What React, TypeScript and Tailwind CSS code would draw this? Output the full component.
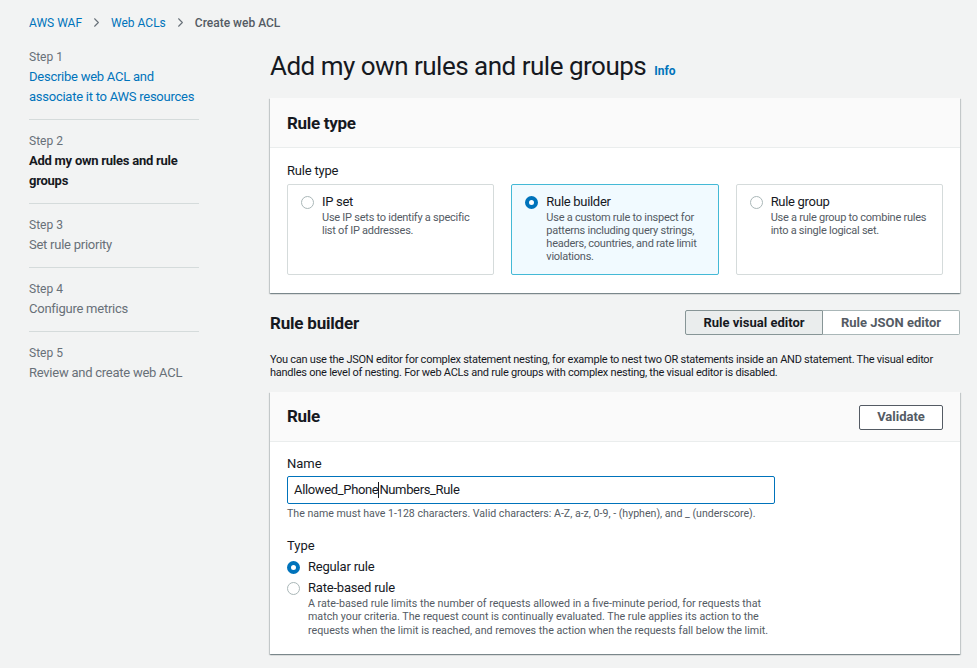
import { ChevronRight } from "lucide-react";

const font = { fontFamily: "Roboto, 'Noto Sans', Arial, sans-serif" };

type Step = { label: string; title: string; state: "link" | "active" | "todo" };

const steps: Step[] = [
  { label: "Step 1", title: "Describe web ACL and associate it to AWS resources", state: "link" },
  { label: "Step 2", title: "Add my own rules and rule groups", state: "active" },
  { label: "Step 3", title: "Set rule priority", state: "todo" },
  { label: "Step 4", title: "Configure metrics", state: "todo" },
  { label: "Step 5", title: "Review and create web ACL", state: "todo" },
];

const ruleTypes = [
  { title: "IP set", desc: "Use IP sets to identify a specific list of IP addresses.", selected: false },
  {
    title: "Rule builder",
    desc: "Use a custom rule to inspect for patterns including query strings, headers, countries, and rate limit violations.",
    selected: true,
  },
  { title: "Rule group", desc: "Use a rule group to combine rules into a single logical set.", selected: false },
];

function Radio({ checked }: { checked: boolean }) {
  return checked ? (
    <span className="mt-[3px] block h-[13px] w-[13px] shrink-0 rounded-full border-[4px] border-[#0073bb] bg-white" />
  ) : (
    <span className="mt-[3px] block h-[13px] w-[13px] shrink-0 rounded-full border border-[#aab7b8] bg-white" />
  );
}

function Container({ title, action, children }: { title: string; action?: React.ReactNode; children: React.ReactNode }) {
  return (
    <div className="bg-white shadow-[0_1px_1px_0_rgba(0,28,36,0.3),1px_1px_1px_0_rgba(0,28,36,0.15),-1px_1px_1px_0_rgba(0,28,36,0.15)]">
      <div className="flex h-[50px] items-center justify-between border-b border-[#eaeded] bg-[#fafafa] px-[17px] pt-[2px]">
        <h2 className="text-[17px] font-bold tracking-[-0.3px] text-[#16191f]">{title}</h2>
        {action}
      </div>
      <div className="px-[17px] pt-[13px]">{children}</div>
    </div>
  );
}

export default function App() {
  return (
    <div style={font} className="h-[668px] w-[977px] overflow-hidden bg-[#f2f3f3] text-[#16191f]">
      {/* breadcrumbs */}
      <nav className="flex h-[44px] items-center gap-[7px] pl-[29px] pt-[1px] text-[12px]">
        <span className="text-[#0073bb]">AWS WAF</span>
        <ChevronRight size={15} strokeWidth={1.7} className="text-[#687078]" />
        <span className="text-[#0073bb]">Web ACLs</span>
        <ChevronRight size={15} strokeWidth={1.7} className="text-[#687078]" />
        <span className="font-medium text-[#545b64]">Create web ACL</span>
      </nav>

      <div className="flex">
        {/* wizard steps */}
        <aside className="w-[270px] shrink-0 pl-[29px] pr-[71px] pt-[5px]">
          {steps.map((s, i) => (
            <div key={s.label} className={i === 0 ? "pb-[12px]" : "border-t border-[#d5dbdb] pb-[12px] pt-[13px]"}>
              <div className="text-[12px] leading-[16px] text-[#687078]">{s.label}</div>
              <div
                className={
                  "mt-[2px] text-[13px] leading-[20px] tracking-[-0.25px] " +
                  (s.state === "link"
                    ? "text-[#0073bb]"
                    : s.state === "active"
                      ? "font-bold text-[#16191f]"
                      : "text-[#687078]")
                }
              >
                {s.title}
              </div>
            </div>
          ))}
        </aside>

        <main className="w-[690px]">
          <div className="flex items-baseline gap-[8px] pb-[12px] pt-[2px]">
            <h1 className="text-[26px] leading-[40px] tracking-[-0.5px] text-[#16191f]">
              Add my own rules and rule groups
            </h1>
            <span className="text-[12px] font-bold text-[#0073bb]">Info</span>
          </div>

          <Container title="Rule type">
            <div className="text-[13px] leading-[20px] tracking-[-0.2px]">Rule type</div>
            <div className="mt-[3px] grid grid-cols-3 gap-[17px] pb-[18px]">
              {ruleTypes.map((t) => (
                <div
                  key={t.title}
                  className={
                    "flex h-[91px] gap-[8px] rounded-[2px] border px-[13px] py-[8px] " +
                    (t.selected ? "border-[#44b9d6] bg-[#f1faff]" : "border-[#d5dbdb] bg-white")
                  }
                >
                  <Radio checked={t.selected} />
                  <div>
                    <div className="text-[13px] leading-[18px] tracking-[-0.3px]">{t.title}</div>
                    <div className="text-[11px] leading-[13px] tracking-[-0.25px] text-[#545b64]">{t.desc}</div>
                  </div>
                </div>
              ))}
            </div>
          </Container>

          {/* rule builder header with editor toggle */}
          <div className="mt-[16px] flex items-center justify-between">
            <h2 className="pt-[2px] text-[17px] font-bold tracking-[-0.2px]">Rule builder</h2>
            <div className="flex text-[13px] font-bold">
              <span className="flex h-[25px] w-[138px] items-center justify-center rounded-l-[2px] border border-[#879596] bg-[#eaeded]">
                Rule visual editor
              </span>
              <span className="flex h-[25px] w-[137px] items-center justify-center rounded-r-[2px] border border-l-0 border-[#aab7b8] bg-white text-[#545b64]">
                Rule JSON editor
              </span>
            </div>
          </div>
          <p className="mt-[16px] text-[11px] leading-[13px] tracking-[-0.25px] text-[#16191f]">
            You can use the JSON editor for complex statement nesting, for example to nest two OR statements inside an AND statement. The visual editor handles one level of nesting. For web ACLs and rule groups with complex nesting, the visual editor is disabled.
          </p>

          <div className="mt-[13px]">
            <Container
              title="Rule"
              action={
                <span className="flex h-[25px] w-[84px] items-center justify-center rounded-[2px] border border-[#545b64] bg-white text-[13px] font-bold text-[#545b64]">
                  Validate
                </span>
              }
            >
              <div className="text-[13px] leading-[18px]">Name</div>
              <div className="mt-[3px] flex h-[28px] w-[488px] items-center rounded-[2px] border border-[#0073bb] px-[6px] text-[13px] tracking-[-0.35px]">
                Allowed_Phone
                <span className="h-[16px] w-px bg-[#16191f]" />
                Numbers_Rule
              </div>
              <div className="mt-[3px] text-[10.6px] leading-[14px] text-[#545b64]">
                The name must have 1-128 characters. Valid characters: A-Z, a-z, 0-9, - (hyphen), and _ (underscore).
              </div>

              <div className="mt-[16px] text-[13px] leading-[18px]">Type</div>
              <div className="mt-[3px] flex gap-[8px]">
                <Radio checked />
                <span className="text-[13px] leading-[18px] tracking-[-0.2px]">Regular rule</span>
              </div>
              <div className="mt-[3px] flex gap-[8px] pb-[17px]">
                <Radio checked={false} />
                <div>
                  <div className="text-[13px] leading-[18px] tracking-[-0.2px]">Rate-based rule</div>
                  <div className="w-[468px] text-[10.7px] leading-[13.5px] text-[#545b64]">
                    A rate-based rule limits the number of requests allowed in a five-minute period, for requests that match your criteria. The request count is continually evaluated. The rule applies its action to the requests when the limit is reached, and removes the action when the requests fall below the limit.
                  </div>
                </div>
              </div>
            </Container>
          </div>
        </main>
      </div>
    </div>
  );
}
